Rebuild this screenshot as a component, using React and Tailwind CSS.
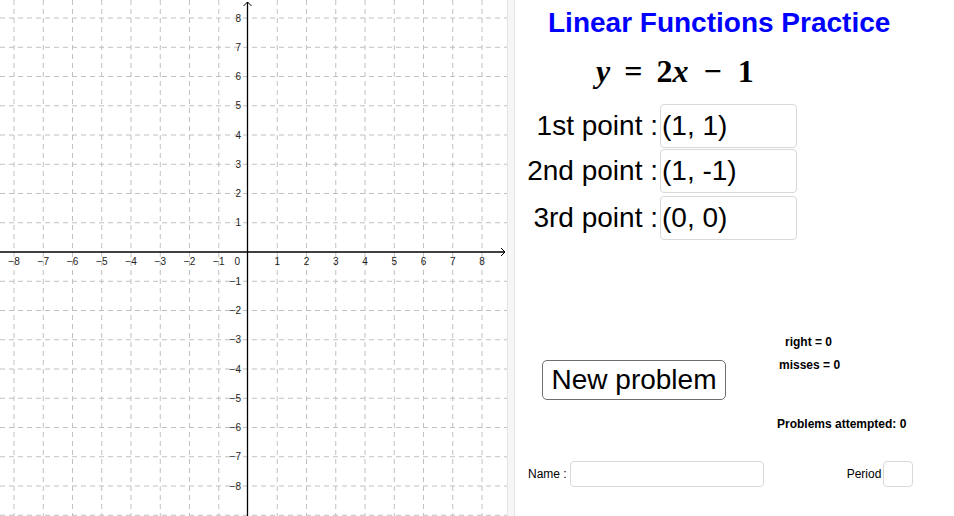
import React from 'react';

const OX = 248;
const OY = 252;
const U = 29.25;
const range = [-9, -8, -7, -6, -5, -4, -3, -2, -1, 0, 1, 2, 3, 4, 5, 6, 7, 8, 9];

function label(n) {
  return n < 0 ? `\u2212${-n}` : `${n}`;
}

function Graph() {
  return (
    <svg width="507" height="516" className="block" style={{ fontFamily: '"Liberation Sans", Arial, sans-serif' }}>
      {range.map((i) => (
        <g key={i} stroke="#c0c0c0" strokeWidth="1" strokeDasharray="5 4">
          {i !== 0 && <line x1={OX + i * U} y1="0" x2={OX + i * U} y2="516" />}
          {i !== 0 && <line x1="0" y1={OY - i * U} x2="507" y2={OY - i * U} />}
        </g>
      ))}
      <line x1="0" y1={OY} x2="505" y2={OY} stroke="#000" strokeWidth="1.3" />
      <line x1={OX - 0.5} y1="516" x2={OX - 0.5} y2="2" stroke="#000" strokeWidth="1.3" />
      <polyline points={`501,${OY - 4} 505,${OY} 501,${OY + 4}`} fill="none" stroke="#000" strokeWidth="1" />
      <polyline points={`${OX - 4.5},6 ${OX - 0.5},2 ${OX + 3.5},6`} fill="none" stroke="#000" strokeWidth="1" />
      {range
        .filter((i) => i >= -8 && i <= 8 && i !== 0)
        .map((i) => (
          <g key={`l${i}`} fontSize="10" fill="#222">
            <text x={OX + i * U} y={OY + 13} textAnchor="middle">
              {label(i)}
            </text>
            <text x={OX - 7} y={OY - i * U + 3.5} textAnchor="end">
              {label(i)}
            </text>
          </g>
        ))}
      <text x={OX - 8} y={OY + 13} fontSize="10" fill="#222" textAnchor="end">
        0
      </text>
    </svg>
  );
}

function PointRow({ name, value }) {
  return (
    <div className="flex items-center h-[45px]">
      <span className="w-[145px] text-right text-[28px] text-black pr-[2px] whitespace-nowrap">{name}</span>
      <div className="w-[137px] h-[44px] border border-[#d9d9d9] rounded-[4px] flex items-center pl-[1px] text-[28px] text-black bg-white">
        {value}
      </div>
    </div>
  );
}

export default function App() {
  return (
    <div className="w-[954px] h-[516px] flex bg-white overflow-hidden" style={{ fontFamily: '"Liberation Sans", Arial, sans-serif' }}>
      <div className="w-[507px] h-full shrink-0">
        <Graph />
      </div>
      <div className="w-[8px] h-full shrink-0 bg-[#f6f6f6] border-l border-r border-[#e4e4e4]" />
      <div className="flex-1 flex flex-col">
        <h1 className="pl-[33px] pt-[7px] text-[28px] leading-[32px] font-bold text-[#0000ff] whitespace-nowrap">Linear Functions Practice</h1>
        <div className="pl-[81px] mt-[15px] h-[34px] flex items-center text-[32px] font-bold text-black" style={{ fontFamily: '"Liberation Serif", "Times New Roman", serif' }}>
          <span className="italic">y</span>
          <span className="ml-[14px]">=</span>
          <span className="ml-[14px]">2</span>
          <span className="italic">x</span>
          <span className="ml-[15px]">&minus;</span>
          <span className="ml-[16px]">1</span>
        </div>
        <div className="mt-[15px] flex flex-col">
          <PointRow name="1st point :" value="(1, 1)" />
          <PointRow name="2nd point :" value="(1, -1)" />
          <div className="mt-[2px]">
            <PointRow name="3rd point :" value="(0, 0)" />
          </div>
        </div>
        <div className="mt-[95px] flex">
          <div className="pl-[27px] pt-[25px]">
            <button className="w-[184px] h-[40px] border-[1.5px] border-[#6e6e6e] rounded-[5px] text-[28px] text-black bg-white leading-none">
              New problem
            </button>
          </div>
          <div className="pl-[53px] flex flex-col text-[12px] font-bold text-black whitespace-nowrap">
            <span className="pl-[6px] leading-[14px]">right = 0</span>
            <span className="mt-[9px] leading-[14px]">misses = 0</span>
            <span className="mt-[45px] -ml-[2px] leading-[14px]">Problems attempted: 0</span>
          </div>
        </div>
        <div className="mt-[30px] flex items-center text-[12px] text-black">
          <span className="pl-[13px] pr-[3px]">Name :</span>
          <div className="w-[194px] h-[26px] border border-[#d9d9d9] rounded-[4px]" />
          <span className="ml-[83px]">Period</span>
          <div className="ml-[2px] w-[30px] h-[26px] border border-[#d9d9d9] rounded-[4px]" />
        </div>
      </div>
    </div>
  );
}
